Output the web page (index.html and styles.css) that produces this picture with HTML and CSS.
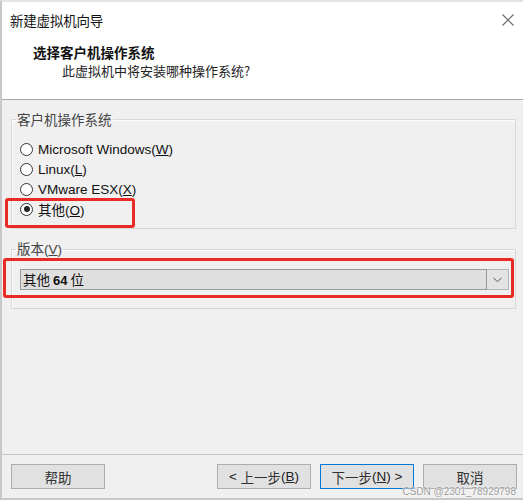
FILE: index.html
```html
<!DOCTYPE html>
<html lang="zh">
<head>
<meta charset="utf-8">
<title>新建虚拟机向导</title>
<link rel="stylesheet" href="styles.css">
</head>
<body>
<div class="window">
  <div class="titlebar">
    <span class="title">新建虚拟机向导</span>
    <span class="close" aria-label="关闭">
      <svg width="12" height="12" viewBox="0 0 12 12"><path d="M0.5 0.5 L11.5 11.5 M11.5 0.5 L0.5 11.5" stroke="#666" stroke-width="1.1" fill="none"/></svg>
    </span>
  </div>
  <div class="header">
    <div class="heading">选择客户机操作系统</div>
    <div class="subheading">此虚拟机中将安装哪种操作系统?</div>
  </div>
  <div class="content">
    <fieldset class="group">
      <legend class="legend">客户机操作系统</legend>
      <div class="radios">
        <label class="radio"><span class="dot"></span><span class="lat">Microsoft Windows(<u>W</u>)</span></label>
        <label class="radio"><span class="dot"></span><span class="lat">Linux(<u>L</u>)</span></label>
        <label class="radio"><span class="dot"></span><span class="lat">VMware ESX(<u>X</u>)</span></label>
        <label class="radio checked"><span class="dot"></span><span>其他<span class="lat">(<u>O</u>)</span></span></label>
      </div>
    </fieldset>
    <fieldset class="group group2">
      <legend class="legend">版本<span class="lat">(<u>V</u>)</span></legend>
      <div class="select">
        <div class="select-value">其他 <span class="lat">64</span> 位</div>
        <div class="select-arrow">
          <svg width="9" height="6" viewBox="0 0 9 6"><path d="M0.5 0.8 L4.5 4.8 L8.5 0.8" stroke="#555" stroke-width="1" fill="none"/></svg>
        </div>
      </div>
    </fieldset>
  </div>
  <div class="footer">
    <button class="btn">帮助</button>
    <div class="spacer"></div>
    <button class="btn"><span class="lat">&lt;&nbsp;</span>上一步<span class="lat">(<u>B</u>)</span></button>
    <button class="btn primary">下一步<span class="lat">(<u>N</u>)&nbsp;&gt;</span></button>
    <button class="btn">取消</button>
  </div>
  <div class="mark mark-radio"></div>
  <div class="mark mark-select"></div>
  <span class="watermark">CSDN @2301_78929798</span>
</div>
</body>
</html>
```
FILE: styles.css
```css
* { box-sizing: border-box; }
html, body { margin: 0; padding: 0; }
body {
  width: 523px;
  height: 500px;
  overflow: hidden;
  background: #fff;
  font-family: "Noto Sans CJK SC", "Liberation Sans", sans-serif;
  color: #000;
}
.lat { font-family: "Liberation Sans", "Noto Sans CJK SC", sans-serif; }
.window {
  position: relative;
  width: 523px;
  height: 500px;
  display: flex;
  flex-direction: column;
  border-top: 2px solid #e4e4e4;
  border-left: 2px solid #c8c8c8;
  border-bottom: 2px solid #c8c8c8;
}
.titlebar {
  height: 36px;
  background: #fff;
  display: flex;
  align-items: center;
  justify-content: space-between;
  padding: 0 9px 0 8px;
}
.title { font-size: 13.5px; color: #111; letter-spacing: -0.2px; }
.close { display: flex; align-items: center; }
.header {
  height: 62px;
  background: #fff;
  padding-left: 31px;
  border-bottom: 1px solid #a6a6a6;
}
.heading {
  font-size: 13.5px;
  font-weight: 700;
  line-height: 20px;
  padding-top: 4px;
  color: #111;
}
.subheading {
  font-size: 13px;
  line-height: 18px;
  padding-left: 29px;
  color: #222;
}
.content {
  flex: 1;
  background: #f0f0f0;
  padding: 9px 7px 0 9px;
  display: flex;
  flex-direction: column;
}
.group {
  margin: 0;
  border: 1px solid #d9d9d9;
  box-shadow: 1px 1px 0 #fbfbfb inset;
  padding: 10px 6px 9px 8px;
  min-width: 0;
}
.legend {
  padding: 0 1px;
  margin-left: -4px;
  font-size: 13.5px;
  line-height: 20px;
  color: #444;
}
.radios { display: flex; flex-direction: column; }
.radio {
  display: flex;
  align-items: center;
  height: 20px;
  font-size: 13.5px;
  color: #111;
}
.dot {
  width: 13px;
  height: 13px;
  border: 1px solid #333;
  border-radius: 50%;
  background: #fff;
  margin-right: 5px;
  display: flex;
  align-items: center;
  justify-content: center;
  flex: none;
}
.checked .dot::after {
  content: "";
  width: 6px;
  height: 6px;
  border-radius: 50%;
  background: #222;
}
.group2 { margin-top: 9px; padding-top: 9px; padding-bottom: 18px; }
.select {
  display: flex;
  height: 21px;
  background: #e3e3e3;
  border: 1px solid #b5b5b5;
}
.select-value {
  flex: 1;
  border: 1px solid #999;
  margin: -1px 0 -1px -1px;
  background: #dfdfdf;
  font-size: 13.5px;
  line-height: 19px;
  padding-left: 2px;
  color: #111;
}
.select-value .lat { font-weight: 700; font-size: 13px; }
.select-arrow {
  width: 21px;
  display: flex;
  align-items: center;
  justify-content: center;
}
.footer {
  height: 44px;
  background: #f0f0f0;
  border-top: 1px solid #c4c4c4;
  display: flex;
  align-items: flex-start;
  padding: 9px 6px 0 9px;
  gap: 9px;
}
.spacer { flex: 1; }
.btn {
  width: 94px;
  height: 25px;
  background: #e1e1e1;
  border: 1px solid #adadad;
  font-family: "Noto Sans CJK SC", "Liberation Sans", sans-serif;
  font-size: 13.5px;
  color: #333;
  padding: 0;
  display: flex;
  align-items: center;
  justify-content: center;
}
.btn .lat { color: #222; }
.btn.primary { border: 1px solid #0078d7; }
/* red annotation boxes drawn over the dialog */
.mark {
  position: absolute;
  border: 3px solid #ea2a24;
  border-radius: 3px;
  pointer-events: none;
}
.mark-radio { left: 3px; top: 196px; width: 130px; height: 30px; }
.mark-select { left: 1px; top: 256px; width: 511px; height: 40px; }
.watermark {
  position: absolute;
  right: 7px;
  bottom: 0;
  font-family: "Liberation Sans", sans-serif;
  font-size: 10px;
  line-height: 12px;
  color: #9a9a9a;
  text-shadow: 0 0 2px #fff, 0 0 1px #fff;
}
```
